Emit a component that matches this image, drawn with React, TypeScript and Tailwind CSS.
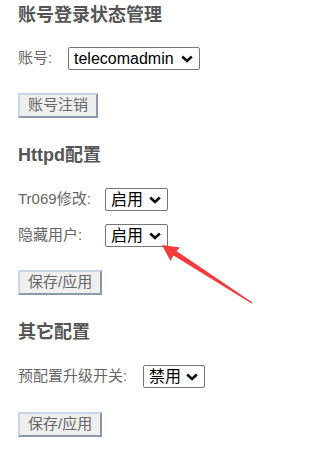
import type { ReactNode } from "react";

const FONT = "font-['Liberation_Sans','Noto_Sans_CJK_SC',sans-serif]";

function Heading({ children, className }: { children: ReactNode; className: string }) {
  return (
    <h3 className={`h-6 text-[18px] leading-6 font-bold text-[#555] ${className}`}>{children}</h3>
  );
}

function FakeSelect({ value, width }: { value: string; width: string }) {
  return (
    <div
      className={`flex h-[23px] items-center justify-between rounded-[2px] border border-[#767676] bg-white pl-[5px] pr-[6px] text-[16px] text-black ${width}`}
    >
      <span className="leading-none">{value}</span>
      <svg width="12" height="8" viewBox="0 0 12 8" className="shrink-0">
        <path d="M1.2 1.5 L6 6 L10.8 1.5" fill="none" stroke="#111" strokeWidth="2.6" />
      </svg>
    </div>
  );
}

function Row({ label, labelW, value, selW, className }: {
  label: string;
  labelW: string;
  value: string;
  selW: string;
  className: string;
}) {
  return (
    <div className={`flex h-[23px] items-center ${className}`}>
      <span className={`text-[15px] text-[#666] ${labelW}`}>{label}</span>
      <FakeSelect value={value} width={selW} />
    </div>
  );
}

function OldButton({ children, className }: { children: ReactNode; className: string }) {
  return (
    <button
      type="button"
      className={`flex h-[25px] items-center border-2 border-t-[#c9d5e8] border-l-[#c9d5e8] border-b-[#8d99aa] border-r-[#8d99aa] bg-[#efefef] px-[8px] text-[15px] text-[#666] ${className}`}
    >
      {children}
    </button>
  );
}

export default function App() {
  return (
    <div className={`relative h-[449px] w-[324px] overflow-hidden bg-white pl-[18px] ${FONT}`}>
      <Heading className="mt-[3px]">账号登录状态管理</Heading>
      <Row label="账号:" labelW="w-[50px]" value="telecomadmin" selW="w-[132px]" className="mt-[20px]" />
      <OldButton className="mt-[23px]">账号注销</OldButton>

      <Heading className="mt-[25px]">Httpd配置</Heading>
      <Row label="Tr069修改:" labelW="w-[87px]" value="启用" selW="w-[63px]" className="mt-[21px]" />
      <Row label="隐藏用户:" labelW="w-[87px]" value="启用" selW="w-[63px]" className="mt-[13px]" />
      <OldButton className="mt-[23px]">保存/应用</OldButton>

      <Heading className="mt-[25px]">其它配置</Heading>
      <Row label="预配置升级开关:" labelW="w-[125px]" value="禁用" selW="w-[62px]" className="mt-[21px]" />
      <OldButton className="mt-[24px]">保存/应用</OldButton>

      <svg className="pointer-events-none absolute left-0 top-0" width="324" height="449">
        <polygon
          points="162,245 180,247.5 176.5,251 252.5,302.5 251.5,303.5 173.5,255.5 170.5,261"
          fill="#f43b3b"
        />
      </svg>
    </div>
  );
}
